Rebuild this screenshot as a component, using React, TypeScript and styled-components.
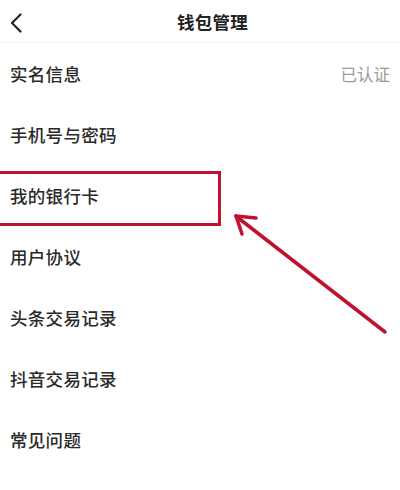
import React from "react";
import styled, { createGlobalStyle } from "styled-components";

const Global = createGlobalStyle`
  html, body { margin: 0; padding: 0; background: #fff; }
  body { font-family: "Noto Sans CJK SC", "Noto Sans", sans-serif; }
`;

const Page = styled.div`
  position: relative;
  width: 400px;
  height: 490px;
  overflow: hidden;
  background: #fff;
`;

const Header = styled.header`
  height: 42px;
  display: flex;
  align-items: center;
  position: relative;
  border-bottom: 1px solid #f3f3f3;
`;

const Back = styled.button`
  border: 0;
  background: none;
  padding: 3px 0 0 9px;
  width: 40px;
  height: 42px;
  display: flex;
  align-items: center;
  cursor: pointer;
`;

const Title = styled.h1`
  flex: 1;
  margin: 0 40px 0 0;
  padding-left: 25px;
  text-align: center;
  font-size: 17.5px;
  font-weight: 700;
  color: #222;
  letter-spacing: 0.3px;
`;

const List = styled.ul`
  list-style: none;
  margin: 0;
  padding: 0;
`;

const Row = styled.li`
  height: 61px;
  display: flex;
  align-items: center;
  justify-content: space-between;
  padding: 0 10px;
`;

const Label = styled.span`
  font-size: 17.5px;
  font-weight: 500;
  color: #2a2a2a;
  letter-spacing: 0.3px;
`;

const Value = styled.span`
  font-size: 16.5px;
  color: #9a9a9a;
`;

const Highlight = styled.div`
  position: absolute;
  left: -4px;
  top: 171px;
  width: 225px;
  height: 55px;
  box-sizing: border-box;
  border: 3px solid #c0112e;
  pointer-events: none;
`;

const Arrow = styled.svg`
  position: absolute;
  left: 0;
  top: 0;
  pointer-events: none;
`;

const items: { label: string; value?: string }[] = [
  { label: "实名信息", value: "已认证" },
  { label: "手机号与密码" },
  { label: "我的银行卡" },
  { label: "用户协议" },
  { label: "头条交易记录" },
  { label: "抖音交易记录" },
  { label: "常见问题" },
];

export default function App() {
  return (
    <>
      <Global />
      <Page>
        <Header>
          <Back aria-label="返回">
            <svg width="14" height="20" viewBox="0 0 14 20">
              <path d="M11.5 1.5 L3 10 L11.5 18.5" fill="none" stroke="#222" strokeWidth="2.2" strokeLinecap="round" strokeLinejoin="round" />
            </svg>
          </Back>
          <Title>钱包管理</Title>
        </Header>
        <List>
          {items.map((it) => (
            <Row key={it.label}>
              <Label>{it.label}</Label>
              {it.value && <Value>{it.value}</Value>}
            </Row>
          ))}
        </List>
        <Highlight />
        <Arrow width="400" height="490" viewBox="0 0 400 490">
          <g stroke="#c0112e" strokeWidth="3.5" strokeLinecap="round" fill="none">
            <path d="M385 332 L237 217" />
            <path d="M236 216 L256 218" />
            <path d="M236 216 L242 234" />
          </g>
        </Arrow>
      </Page>
    </>
  );
}
